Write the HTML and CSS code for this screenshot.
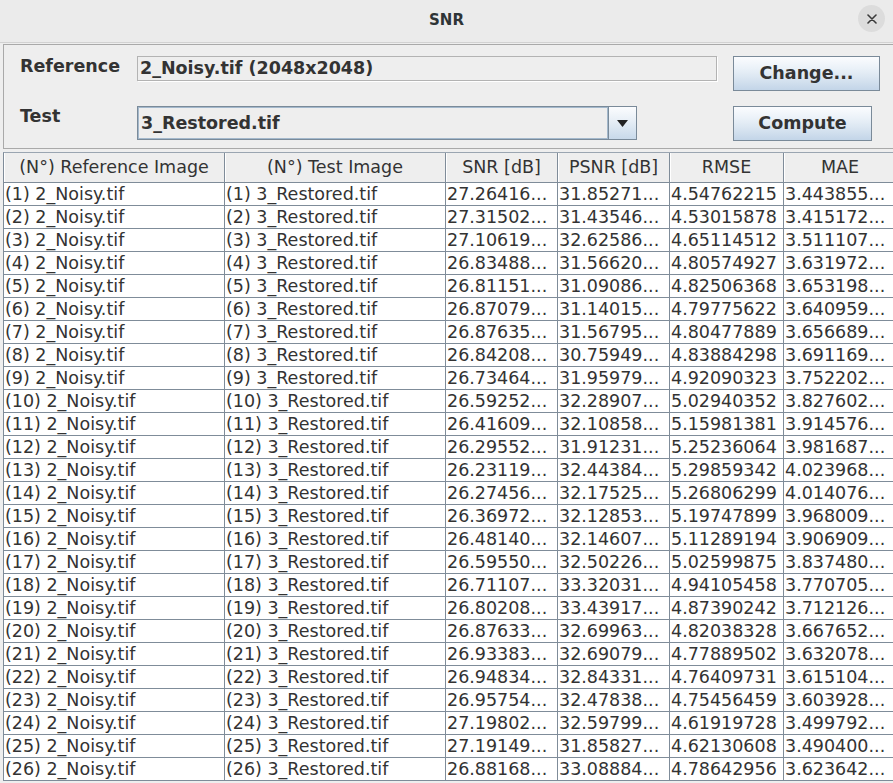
FILE: index.html
```html
<!DOCTYPE html>
<html lang="en">
<head>
<meta charset="utf-8">
<title>SNR</title>
<link rel="stylesheet" href="styles.css">
</head>
<body>
<header class="titlebar">
  <div></div>
  <div class="title">SNR</div>
  <div class="close-wrap">
    <div class="close">
      <svg width="10" height="10" viewBox="0 0 10 10"><path d="M1 1L9 9M9 1L1 9" stroke="#3a3a3a" stroke-width="1.6" stroke-linecap="round"/></svg>
    </div>
  </div>
</header>
<main class="main">
  <section class="form">
    <div class="row">
      <div class="label">Reference</div>
      <div class="field">2_Noisy.tif (2048x2048)</div>
      <div class="btn btn-change">Change...</div>
    </div>
    <div class="row">
      <div class="label">Test</div>
      <div class="combo">
        <div class="combo-text">3_Restored.tif</div>
        <div class="combo-arrow"><svg width="11" height="7" viewBox="0 0 11 7"><path d="M0 0H11L5.5 7Z" fill="#222"/></svg></div>
      </div>
      <div class="btn btn-compute">Compute</div>
    </div>
  </section>
  <section class="table">
    <div class="th">(N°) Reference Image</div><div class="th">(N°) Test Image</div><div class="th">SNR [dB]</div><div class="th">PSNR [dB]</div><div class="th">RMSE</div><div class="th">MAE</div>
    <div class="td">(1) 2_Noisy.tif</div><div class="td">(1) 3_Restored.tif</div><div class="td">27.26416...</div><div class="td">31.85271...</div><div class="td">4.54762215</div><div class="td">3.443855...</div>
    <div class="td">(2) 2_Noisy.tif</div><div class="td">(2) 3_Restored.tif</div><div class="td">27.31502...</div><div class="td">31.43546...</div><div class="td">4.53015878</div><div class="td">3.415172...</div>
    <div class="td">(3) 2_Noisy.tif</div><div class="td">(3) 3_Restored.tif</div><div class="td">27.10619...</div><div class="td">32.62586...</div><div class="td">4.65114512</div><div class="td">3.511107...</div>
    <div class="td">(4) 2_Noisy.tif</div><div class="td">(4) 3_Restored.tif</div><div class="td">26.83488...</div><div class="td">31.56620...</div><div class="td">4.80574927</div><div class="td">3.631972...</div>
    <div class="td">(5) 2_Noisy.tif</div><div class="td">(5) 3_Restored.tif</div><div class="td">26.81151...</div><div class="td">31.09086...</div><div class="td">4.82506368</div><div class="td">3.653198...</div>
    <div class="td">(6) 2_Noisy.tif</div><div class="td">(6) 3_Restored.tif</div><div class="td">26.87079...</div><div class="td">31.14015...</div><div class="td">4.79775622</div><div class="td">3.640959...</div>
    <div class="td">(7) 2_Noisy.tif</div><div class="td">(7) 3_Restored.tif</div><div class="td">26.87635...</div><div class="td">31.56795...</div><div class="td">4.80477889</div><div class="td">3.656689...</div>
    <div class="td">(8) 2_Noisy.tif</div><div class="td">(8) 3_Restored.tif</div><div class="td">26.84208...</div><div class="td">30.75949...</div><div class="td">4.83884298</div><div class="td">3.691169...</div>
    <div class="td">(9) 2_Noisy.tif</div><div class="td">(9) 3_Restored.tif</div><div class="td">26.73464...</div><div class="td">31.95979...</div><div class="td">4.92090323</div><div class="td">3.752202...</div>
    <div class="td">(10) 2_Noisy.tif</div><div class="td">(10) 3_Restored.tif</div><div class="td">26.59252...</div><div class="td">32.28907...</div><div class="td">5.02940352</div><div class="td">3.827602...</div>
    <div class="td">(11) 2_Noisy.tif</div><div class="td">(11) 3_Restored.tif</div><div class="td">26.41609...</div><div class="td">32.10858...</div><div class="td">5.15981381</div><div class="td">3.914576...</div>
    <div class="td">(12) 2_Noisy.tif</div><div class="td">(12) 3_Restored.tif</div><div class="td">26.29552...</div><div class="td">31.91231...</div><div class="td">5.25236064</div><div class="td">3.981687...</div>
    <div class="td">(13) 2_Noisy.tif</div><div class="td">(13) 3_Restored.tif</div><div class="td">26.23119...</div><div class="td">32.44384...</div><div class="td">5.29859342</div><div class="td">4.023968...</div>
    <div class="td">(14) 2_Noisy.tif</div><div class="td">(14) 3_Restored.tif</div><div class="td">26.27456...</div><div class="td">32.17525...</div><div class="td">5.26806299</div><div class="td">4.014076...</div>
    <div class="td">(15) 2_Noisy.tif</div><div class="td">(15) 3_Restored.tif</div><div class="td">26.36972...</div><div class="td">32.12853...</div><div class="td">5.19747899</div><div class="td">3.968009...</div>
    <div class="td">(16) 2_Noisy.tif</div><div class="td">(16) 3_Restored.tif</div><div class="td">26.48140...</div><div class="td">32.14607...</div><div class="td">5.11289194</div><div class="td">3.906909...</div>
    <div class="td">(17) 2_Noisy.tif</div><div class="td">(17) 3_Restored.tif</div><div class="td">26.59550...</div><div class="td">32.50226...</div><div class="td">5.02599875</div><div class="td">3.837480...</div>
    <div class="td">(18) 2_Noisy.tif</div><div class="td">(18) 3_Restored.tif</div><div class="td">26.71107...</div><div class="td">33.32031...</div><div class="td">4.94105458</div><div class="td">3.770705...</div>
    <div class="td">(19) 2_Noisy.tif</div><div class="td">(19) 3_Restored.tif</div><div class="td">26.80208...</div><div class="td">33.43917...</div><div class="td">4.87390242</div><div class="td">3.712126...</div>
    <div class="td">(20) 2_Noisy.tif</div><div class="td">(20) 3_Restored.tif</div><div class="td">26.87633...</div><div class="td">32.69963...</div><div class="td">4.82038328</div><div class="td">3.667652...</div>
    <div class="td">(21) 2_Noisy.tif</div><div class="td">(21) 3_Restored.tif</div><div class="td">26.93383...</div><div class="td">32.69079...</div><div class="td">4.77889502</div><div class="td">3.632078...</div>
    <div class="td">(22) 2_Noisy.tif</div><div class="td">(22) 3_Restored.tif</div><div class="td">26.94834...</div><div class="td">32.84331...</div><div class="td">4.76409731</div><div class="td">3.615104...</div>
    <div class="td">(23) 2_Noisy.tif</div><div class="td">(23) 3_Restored.tif</div><div class="td">26.95754...</div><div class="td">32.47838...</div><div class="td">4.75456459</div><div class="td">3.603928...</div>
    <div class="td">(24) 2_Noisy.tif</div><div class="td">(24) 3_Restored.tif</div><div class="td">27.19802...</div><div class="td">32.59799...</div><div class="td">4.61919728</div><div class="td">3.499792...</div>
    <div class="td">(25) 2_Noisy.tif</div><div class="td">(25) 3_Restored.tif</div><div class="td">27.19149...</div><div class="td">31.85827...</div><div class="td">4.62130608</div><div class="td">3.490400...</div>
    <div class="td">(26) 2_Noisy.tif</div><div class="td">(26) 3_Restored.tif</div><div class="td">26.88168...</div><div class="td">33.08884...</div><div class="td">4.78642956</div><div class="td">3.623642...</div>
  </section>
</main>
</body>
</html>
```
FILE: styles.css
```css
html, body {
  margin: 0;
  padding: 0;
}
body {
  width: 893px;
  height: 783px;
  overflow: hidden;
  background: #eeeeee;
  font-family: "DejaVu Sans", "Noto Sans", sans-serif;
  color: #333333;
}

/* title bar */
.titlebar {
  height: 42px;
  background: #ebebeb;
  border-bottom: 1px solid #d2d2d2;
  display: grid;
  grid-template-columns: 1fr auto 1fr;
  align-items: center;
}
.title {
  font-weight: bold;
  font-size: 15px;
  color: #2e3436;
  padding-bottom: 3px;
}
.close-wrap {
  display: flex;
  justify-content: flex-end;
  padding-right: 8px;
  padding-bottom: 5px;
}
.close {
  width: 27px;
  height: 27px;
  border-radius: 50%;
  background: #dcdcdc;
  display: flex;
  align-items: center;
  justify-content: center;
}

/* main content */
.main {
  padding: 1px 0 0 3px;
}
.form {
  border: 1px solid #a9a9a9;
  border-right: none;
  padding: 11px 0 7px 16px;
  display: flex;
  flex-direction: column;
  gap: 15px;
}
.row {
  display: flex;
  align-items: flex-start;
}
.label {
  width: 117px;
  font-weight: bold;
  font-size: 17.5px;
  line-height: 20px;
  color: #333333;
}
.field {
  box-sizing: border-box;
  width: 580px;
  height: 25px;
  border: 1px solid #b3b3b3;
  box-shadow: 1px 1px 0 #ffffff;
  padding-left: 2px;
  font-weight: bold;
  font-size: 17.5px;
  line-height: 23px;
  color: #333333;
  white-space: nowrap;
}
.btn {
  box-sizing: border-box;
  height: 35px;
  border: 1px solid #7a8a99;
  background: linear-gradient(#fbfcfe 0%, #eaf1f8 35%, #dce7f2 60%, #c3d5e8 100%);
  font-weight: bold;
  font-size: 17.5px;
  color: #333333;
  display: flex;
  align-items: center;
  justify-content: center;
  padding-bottom: 1px;
}
.btn-change {
  width: 147px;
  margin-left: 16px;
}
.btn-compute {
  width: 139px;
  margin-left: 96px;
}
.combo {
  box-sizing: border-box;
  width: 500px;
  height: 34px;
  border: 1px solid #7a8a99;
  display: flex;
}
.combo-text {
  flex: 1;
  box-shadow: inset 0 0 0 1px #a3b8cc;
  padding-left: 3px;
  font-weight: bold;
  font-size: 17.5px;
  line-height: 32px;
  color: #333333;
}
.combo-arrow {
  width: 27px;
  border-left: 1px solid #7a8a99;
  background: linear-gradient(#fbfcfe 0%, #e6eef6 45%, #c8d9ea 100%);
  display: flex;
  align-items: center;
  justify-content: center;
}

/* table */
.table {
  margin-top: 3px;
  display: grid;
  grid-template-columns: 221px 221px 112px 112px 114px 113px;
  grid-auto-rows: 23px;
  grid-template-rows: 30px;
  width: max-content;
  border-left: 1px solid #7f8c99;
  border-top: 1px solid #9aa5b1;
  background: #ffffff;
}
.th, .td {
  box-sizing: border-box;
  border-right: 1px solid #7f8c99;
  border-bottom: 1px solid #7f8c99;
  font-size: 17.5px;
  color: #333333;
  white-space: nowrap;
  overflow: hidden;
}
.th {
  background: #eeeeee;
  box-shadow: inset 1px 0 0 #ffffff;
  text-align: center;
  line-height: 29px;
}
.td {
  line-height: 22px;
  padding-left: 1px;
  background: #ffffff;
}
```
